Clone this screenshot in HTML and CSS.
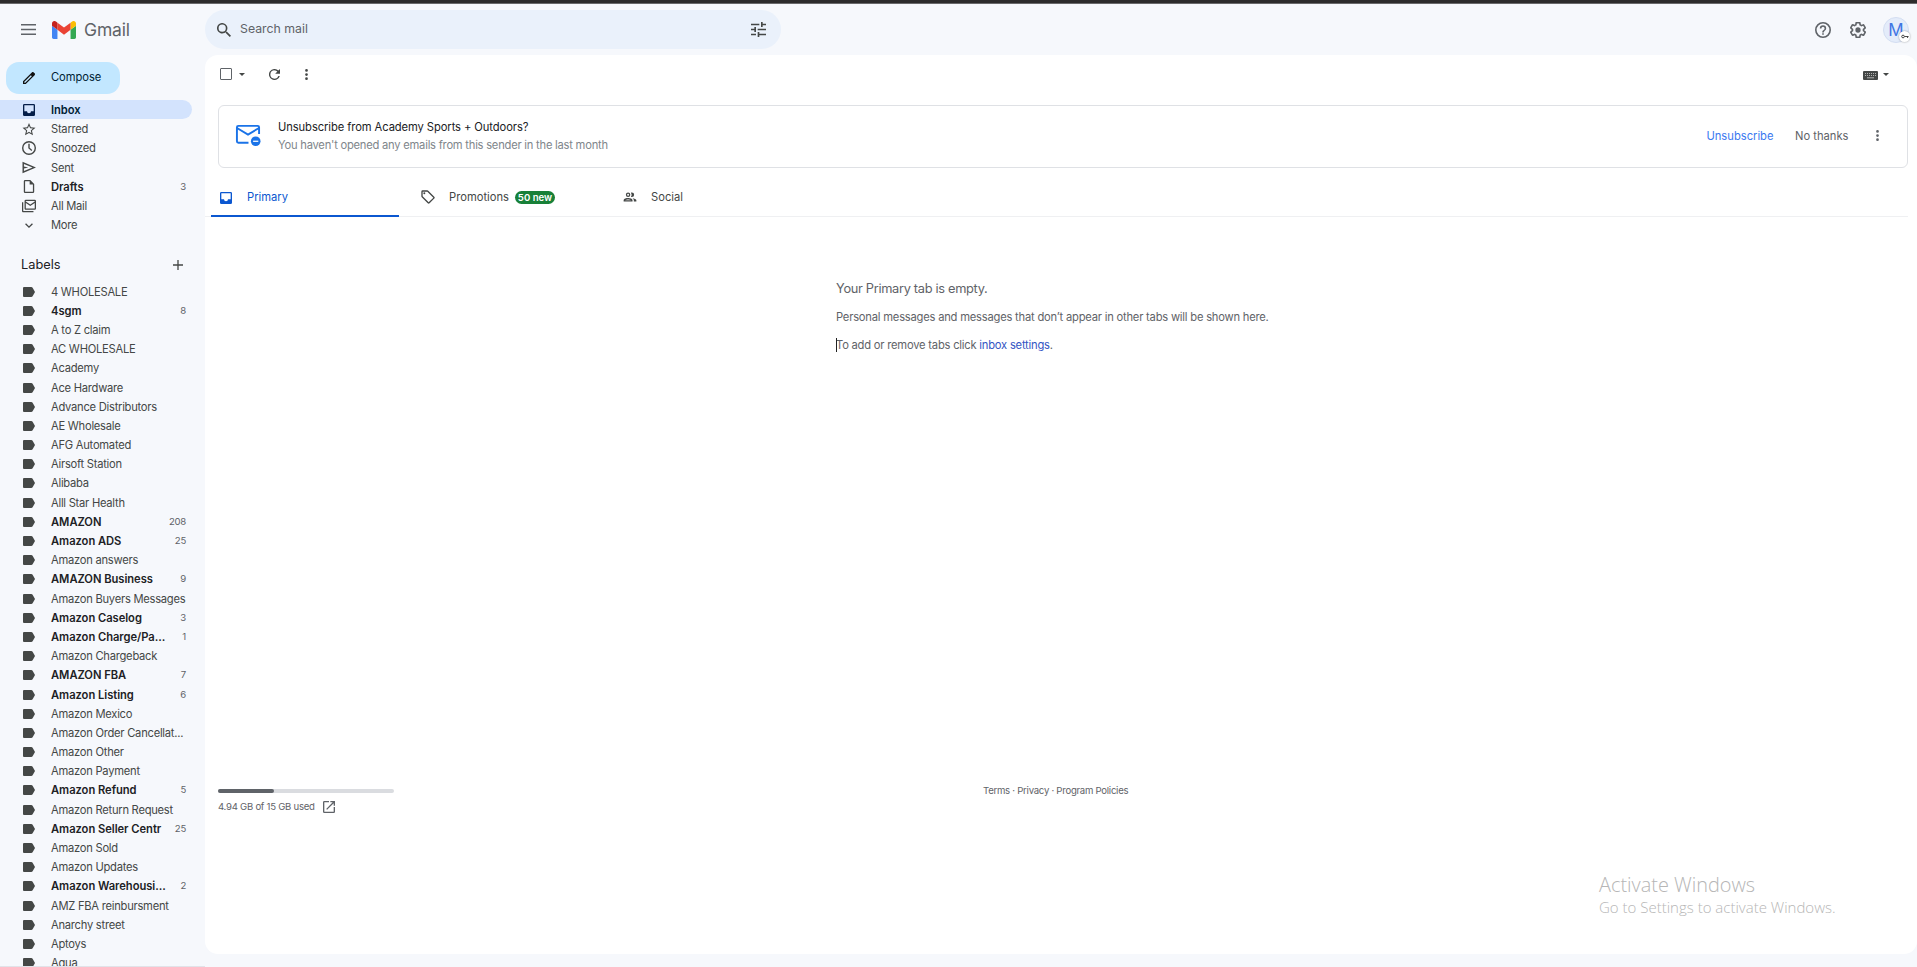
FILE: index.html
```
<!DOCTYPE html>
<html lang="en">
<head>
<meta charset="utf-8">
<title>Gmail</title>
<link rel="stylesheet" href="styles.css">
</head>
<body>
<svg class="sprite" aria-hidden="true">
  <symbol id="label" viewBox="0 0 12 10"><path d="M1 0h7.3q.8 0 1.3.7L12 5 9.600 9.300Q9.100 10 8.300 10H1Q0 10 0 9V1Q0 0 1 0z"/></symbol>
  <symbol id="inbox" viewBox="3 3 18 18"><path d="M19 3H5a2 2 0 0 0-2 2v14a2 2 0 0 0 2 2h14a2 2 0 0 0 2-2V5a2 2 0 0 0-2-2zm0 11h-4a3 3 0 0 1-6 0H5V5h14z"/></symbol>
  <symbol id="dots" viewBox="10 4 4 16"><path d="M12 8a2 2 0 1 0 0-4 2 2 0 0 0 0 4zm0 2a2 2 0 1 0 0 4 2 2 0 0 0 0-4zm0 6a2 2 0 1 0 0 4 2 2 0 0 0 0-4z"/></symbol>
  <symbol id="caret" viewBox="0 0 10 5"><path d="M0 0h10L5 5z"/></symbol>
</svg>
<div class="topline"></div>
<header class="header">
  <div class="brand">
    <svg class="menu" viewBox="0 0 15 11"><path d="M0 .8h15M0 5.500h15M0 10.200h15"/></svg>
    <svg class="logo" viewBox="52 42 88 66"><path fill="#4285f4" d="M58 108h14V74L52 59v43c0 3.320 2.690 6 6 6"/><path fill="#34a853" d="M120 108h14c3.320 0 6-2.690 6-6V59l-20 15"/><path fill="#fbbc04" d="M120 48v26l20-15v-8c0-7.420-8.470-11.650-14.400-7.200"/><path fill="#ea4335" d="M72 74V48l24 18 24-18v26L96 92"/><path fill="#c5221f" d="M52 51v8l20 15V48l-5.600-4.200c-5.940-4.450-14.400-.22-14.400 7.200"/></svg>
    <span class="wordmark">Gmail</span>
  </div>
  <div class="search">
    <svg class="i-search" viewBox="3 3 17.500 17.500"><path d="M15.500 14h-.79l-.28-.27A6.500 6.500 0 1 0 13.730 14.430l.27.28v.79l5 4.990L20.490 19zM9.500 14a4.500 4.500 0 1 1 0-9 4.500 4.500 0 0 1 0 9z"/></svg>
    <span>Search mail</span>
    <svg class="i-tune" viewBox="3 3 18 18"><path d="M3 17v2h6v-2zM3 5v2h10V5zm10 16v-2h8v-2h-8v-2h-2v6zM7 9v2H3v2h4v2h2V9zm14 4v-2H11v2zm-6-4h2V7h4V5h-4V3h-2z"/></svg>
  </div>
  <div class="account">
    <svg class="i-round" viewBox="2 2 20 20"><path d="M11 18h2v-2h-2zm1-16a10 10 0 1 0 0 20 10 10 0 0 0 0-20zm0 18a8 8 0 1 1 0-16 8 8 0 0 1 0 16zm0-14a4 4 0 0 0-4 4h2a2 2 0 1 1 4 0c0 2-3 1.750-3 5h2c0-2.250 3-2.500 3-5a4 4 0 0 0-4-4z"/></svg>
    <svg class="i-round" viewBox="2 2 20 20"><path d="M13.850 22.250h-3.700c-.74 0-1.360-.54-1.450-1.270l-.27-1.890c-.27-.14-.53-.29-.79-.46l-1.800.72c-.7.26-1.470-.03-1.810-.65L2.200 15.530c-.35-.66-.2-1.440.36-1.880l1.530-1.190c-.01-.15-.02-.3-.02-.46 0-.15.010-.31.020-.46l-1.520-1.190c-.59-.45-.74-1.260-.37-1.880l1.850-3.190c.34-.62 1.110-.9 1.790-.63l1.810.73c.26-.17.52-.32.780-.46l.27-1.910c.09-.7.710-1.250 1.440-1.250h3.700c.74 0 1.360.54 1.450 1.270l.27 1.890c.27.14.53.29.790.46l1.800-.72c.71-.26 1.480.03 1.820.65l1.840 3.180c.36.66.2 1.440-.36 1.880l-1.520 1.190c.01.15.02.3.020.46s-.01.310-.02.460l1.520 1.190c.56.450.72 1.230.37 1.860l-1.860 3.220c-.34.620-1.110.9-1.800.63l-1.800-.72c-.26.17-.52.320-.78.460l-.27 1.910c-.1.680-.72 1.220-1.460 1.220zm-3.230-2h2.760l.37-2.550.53-.22c.44-.18.880-.44 1.340-.78l.45-.34 2.380.96 1.380-2.400-2.030-1.580.07-.56c.03-.26.060-.51.060-.78s-.03-.53-.06-.78l-.07-.56 2.030-1.580-1.390-2.400-2.390.96-.45-.35c-.42-.32-.87-.58-1.330-.77l-.52-.22-.37-2.550h-2.760l-.37 2.550-.53.210c-.44.190-.88.440-1.340.79l-.45.330-2.380-.95-1.390 2.390 2.030 1.580-.07.560a7 7 0 0 0-.06.790c0 .26.020.530.060.780l.07.560-2.030 1.580 1.380 2.400 2.390-.96.450.35c.43.330.86.580 1.330.77l.53.220z"/><circle cx="12" cy="12" r="3.300"/></svg>
    <div class="avatar">M<span class="key"><svg viewBox="0 0 9 5"><circle cx="2.300" cy="2.500" r="1.500"/><path d="M4 2.500h4.500M7.400 2.500v1.700"/></svg></span></div>
  </div>
</header>
<div class="body">
  <nav class="side">
    <div class="compose"><svg viewBox="3 3 18 18"><path d="M20.410 4.940l-1.350-1.350a2 2 0 0 0-2.830 0L3 16.820V21h4.180L20.410 7.770a2 2 0 0 0 0-2.830zM6.410 19.060 5 19v-1.360l9.820-9.820 1.410 1.410z"/></svg><span>Compose</span></div>
    <div class="rows">
      <div class="row on"><svg class="ic" viewBox="0 0 12 12"><use href="#inbox"/></svg><span class="b">Inbox</span></div>
      <div class="row"><svg class="ic" viewBox="2 2 20 20"><path d="M22 9.240l-7.190-.62L12 2 9.190 8.630 2 9.240l5.460 4.730L5.820 21 12 17.270 18.180 21l-1.630-7.030zM12 15.400l-3.760 2.270 1-4.280-3.320-2.880 4.380-.38L12 6.100l1.710 4.040 4.380.38-3.320 2.880 1 4.280z"/></svg><span>Starred</span></div>
      <div class="row"><svg class="ic wide" viewBox="2 2 20 20"><path d="M12 2a10 10 0 1 0 0 20 10 10 0 0 0 0-20zm0 18a8 8 0 1 1 0-16 8 8 0 0 1 0 16zm1-14h-2v6.400l4.400 3.800 1.200-1.400-3.600-3.100z"/></svg><span>Snoozed</span></div>
      <div class="row"><svg class="ic" viewBox="2.500 3 19 18"><path d="M3 4v16l19-8zm2 3l11.900 5L5 17v-3.700l6-1.300-6-1.300z"/></svg><span>Sent</span></div>
      <div class="row"><svg class="ic" viewBox="2 2 20 20"><path d="M14 2H6a2 2 0 0 0-2 2v16a2 2 0 0 0 2 2h12a2 2 0 0 0 2-2V8zM6 20V4h7v5h5v11z"/></svg><span class="b">Drafts</span><i>3</i></div>
      <div class="row"><svg class="ic wide" viewBox="1 2 22 20"><path d="M21 2H7a2 2 0 0 0-2 2v12c0 1.100.9 2 2 2h14a2 2 0 0 0 2-2V4a2 2 0 0 0-2-2zm0 14H7V7.400l7 4.600 7-4.600zm-7-6.300L7 5V4h14v1zM3 6H1v14c0 1.100.9 2 2 2h16v-2H3z"/></svg><span>All Mail</span></div>
      <div class="row"><svg class="ic" viewBox="2 2 20 20"><path d="M7.400 8.600 12 13.200l4.600-4.600L18 10l-6 6-6-6z"/></svg><span>More</span></div>
    </div>
    <div class="labels-head"><span>Labels</span><svg viewBox="0 0 10 10"><path d="M5 0v10M0 5h10"/></svg></div>
    <div class="rows labels">
      <div class="row"><svg class="tag"><use href="#label"/></svg><span>4 WHOLESALE</span></div>
      <div class="row"><svg class="tag"><use href="#label"/></svg><span class="b">4sgm</span><i>8</i></div>
      <div class="row"><svg class="tag"><use href="#label"/></svg><span>A to Z claim</span></div>
      <div class="row"><svg class="tag"><use href="#label"/></svg><span>AC WHOLESALE</span></div>
      <div class="row"><svg class="tag"><use href="#label"/></svg><span>Academy</span></div>
      <div class="row"><svg class="tag"><use href="#label"/></svg><span>Ace Hardware</span></div>
      <div class="row"><svg class="tag"><use href="#label"/></svg><span>Advance Distributors</span></div>
      <div class="row"><svg class="tag"><use href="#label"/></svg><span>AE Wholesale</span></div>
      <div class="row"><svg class="tag"><use href="#label"/></svg><span>AFG Automated</span></div>
      <div class="row"><svg class="tag"><use href="#label"/></svg><span>Airsoft Station</span></div>
      <div class="row"><svg class="tag"><use href="#label"/></svg><span>Alibaba</span></div>
      <div class="row"><svg class="tag"><use href="#label"/></svg><span>Alll Star Health</span></div>
      <div class="row"><svg class="tag"><use href="#label"/></svg><span class="b">AMAZON</span><i>208</i></div>
      <div class="row"><svg class="tag"><use href="#label"/></svg><span class="b">Amazon ADS</span><i>25</i></div>
      <div class="row"><svg class="tag"><use href="#label"/></svg><span>Amazon answers</span></div>
      <div class="row"><svg class="tag"><use href="#label"/></svg><span class="b">AMAZON Business</span><i>9</i></div>
      <div class="row"><svg class="tag"><use href="#label"/></svg><span>Amazon Buyers Messages</span></div>
      <div class="row"><svg class="tag"><use href="#label"/></svg><span class="b">Amazon Caselog</span><i>3</i></div>
      <div class="row"><svg class="tag"><use href="#label"/></svg><span class="b">Amazon Charge/Pa...</span><i>1</i></div>
      <div class="row"><svg class="tag"><use href="#label"/></svg><span>Amazon Chargeback</span></div>
      <div class="row"><svg class="tag"><use href="#label"/></svg><span class="b">AMAZON FBA</span><i>7</i></div>
      <div class="row"><svg class="tag"><use href="#label"/></svg><span class="b">Amazon Listing</span><i>6</i></div>
      <div class="row"><svg class="tag"><use href="#label"/></svg><span>Amazon Mexico</span></div>
      <div class="row"><svg class="tag"><use href="#label"/></svg><span>Amazon Order Cancellat...</span></div>
      <div class="row"><svg class="tag"><use href="#label"/></svg><span>Amazon Other</span></div>
      <div class="row"><svg class="tag"><use href="#label"/></svg><span>Amazon Payment</span></div>
      <div class="row"><svg class="tag"><use href="#label"/></svg><span class="b">Amazon Refund</span><i>5</i></div>
      <div class="row"><svg class="tag"><use href="#label"/></svg><span>Amazon Return Request</span></div>
      <div class="row"><svg class="tag"><use href="#label"/></svg><span class="b">Amazon Seller Centr</span><i>25</i></div>
      <div class="row"><svg class="tag"><use href="#label"/></svg><span>Amazon Sold</span></div>
      <div class="row"><svg class="tag"><use href="#label"/></svg><span>Amazon Updates</span></div>
      <div class="row"><svg class="tag"><use href="#label"/></svg><span class="b">Amazon Warehousi...</span><i>2</i></div>
      <div class="row"><svg class="tag"><use href="#label"/></svg><span>AMZ FBA reinbursment</span></div>
      <div class="row"><svg class="tag"><use href="#label"/></svg><span>Anarchy street</span></div>
      <div class="row"><svg class="tag"><use href="#label"/></svg><span>Aptoys</span></div>
      <div class="row"><svg class="tag"><use href="#label"/></svg><span>Aqua</span></div>
    </div>
  </nav>
  <main class="panel">
    <div class="toolbar">
      <span class="box"></span>
      <svg class="caret"><use href="#caret"/></svg>
      <svg class="refresh" viewBox="4 4 16 16"><path d="M17.650 6.350A8 8 0 1 0 19.730 14h-2.080A6 6 0 1 1 12 6c1.660 0 3.140.69 4.220 1.780L13 11h7V4z"/></svg>
      <svg class="dots"><use href="#dots"/></svg>
      <svg class="keyboard" viewBox="0 0 15 9"><rect width="15" height="9" rx="1"/><path d="M2 2.500h11M2 4.500h11" stroke-dasharray="1 1"/><path d="M4 6.800h7"/></svg>
      <svg class="caret"><use href="#caret"/></svg>
    </div>
    <section class="banner">
      <svg class="unsub" viewBox="0 0 27 23"><path d="M25 10V3q0-1.500-1.500-1.500h-20Q2 1.500 2 3v14.500Q2 19 3.500 19H14M2.500 4l11 6.500L24.500 4" fill="none" stroke="#1a73e8" stroke-width="2"/><circle cx="21.500" cy="17.500" r="5" fill="#1a73e8"/><path d="M18.800 17.500h5.400" stroke="#fff" stroke-width="1.300"/></svg>
      <div class="copy"><div class="title">Unsubscribe from Academy Sports + Outdoors?</div><div class="sub">You haven't opened any emails from this sender in the last month</div></div>
      <span class="act blue">Unsubscribe</span>
      <span class="act">No thanks</span>
      <svg class="dots"><use href="#dots"/></svg>
    </section>
    <div class="tabs">
      <div class="tab sel"><svg viewBox="0 0 12 12"><use href="#inbox"/></svg><span>Primary</span></div>
      <div class="tab promo"><svg viewBox="1.500 1.500 21 21"><path d="M21.400 11.600l-9-9A2 2 0 0 0 11 2H4a2 2 0 0 0-2 2v7c0 .55.220 1.050.590 1.420l9 9a2 2 0 0 0 2.820 0l7-7a2 2 0 0 0 0-2.820zM13 20l-9-9V4h7l9 9z"/><circle cx="6.500" cy="6.500" r="1.500"/></svg><span>Promotions</span><b>50 new</b></div>
      <div class="tab social"><svg viewBox="1 2 22 20"><path d="M9 13.750c-2.340 0-7 1.170-7 3.500V19h14v-1.750c0-2.330-4.660-3.500-7-3.500zM4.340 17c.84-.58 2.870-1.250 4.660-1.250s3.820.670 4.660 1.250zM9 12a3.500 3.500 0 1 0 0-7 3.500 3.500 0 0 0 0 7zm0-5a1.500 1.500 0 1 1 0 3 1.500 1.500 0 0 1 0-3zm7.040 6.810c1.160.840 1.960 1.960 1.960 3.440V19h4v-1.750c0-2.020-3.500-3.170-5.960-3.440zM15 12a3.500 3.500 0 1 0 0-7c-.54 0-1.040.130-1.500.350a5.500 5.500 0 0 1 0 6.300c.46.220.96.350 1.500.350z"/></svg><span>Social</span></div>
    </div>
    <div class="empty">
      <p class="lead">Your Primary tab is empty.</p>
      <p>Personal messages and messages that don’t appear in other tabs will be shown here.</p>
      <p class="cursor">To add or remove tabs click <a>inbox settings</a>.</p>
    </div>
    <footer class="foot">
      <div class="storage"><div class="bar"><div class="fill"></div></div><div class="used"><span>4.94 GB of 15 GB used</span><svg viewBox="3 3 18 18"><path d="M19 19H5V5h7V3H5a2 2 0 0 0-2 2v14a2 2 0 0 0 2 2h14a2 2 0 0 0 2-2v-7h-2zM14 3v2h3.590l-9.830 9.830 1.410 1.410L19 6.410V10h2V3z"/></svg></div></div>
      <div class="links">Terms · Privacy · Program Policies</div>
    </footer>
  </main>
</div>
<div class="watermark"><div>Activate Windows</div><p>Go to Settings to activate Windows.</p></div>
</body>
</html>
```
FILE: styles.css
```
* { box-sizing: border-box; }
body {
  margin: 0;
  width: 1917px;
  height: 967px;
  overflow: hidden;
  display: flex;
  flex-direction: column;
  background: #f6f8fc;
  color: #444746;
  font: 11.2px/18px Inter, "Open Sans", sans-serif;
  white-space: nowrap;
}
svg { display: block; flex: none; fill: #444746; }
.sprite { position: absolute; width: 0; height: 0; }
.topline { height: 4px; background: #2d2c2c; border-bottom: 1px solid #69696b; flex: none; }

.header { height: 51px; display: flex; flex: none; }
.brand { width: 205px; display: flex; align-items: center; padding: 1px 0 0 21px; }
.menu { width: 15px; height: 11px; stroke: #5f6368; stroke-width: 1.5; margin-top: -1px; }
.logo { width: 24px; height: 18px; margin-left: 16px; }
.wordmark { margin: 0 0 0 8px; font-size: 17.5px; color: #5f6368; letter-spacing: -.15px; line-height: 22px; }
.search { width: 576px; height: 39px; margin-top: 6px; border-radius: 20px; background: #eaf1fb; display: flex; align-items: center; padding: 0 15.500px 0 12px; font-size: 12.3px; color: #5f6368; }
.search span { margin: -2px 0 0 9px; flex: 1; }
.i-search { width: 14px; height: 14px; }
.i-tune { width: 15px; height: 15px; }
.account { margin-left: auto; display: flex; align-items: center; padding: 0 8px 0 0; }
.i-round { width: 16px; height: 16px; fill: #5f6368; margin-right: 19px; }
.i-round + .i-round { margin-right: 17.500px; }
.avatar { position: relative; width: 26px; height: 26px; border-radius: 50%; background: #e4ecfa; border: 1px solid #d3def2; color: #3f76e4; font-size: 17px; line-height: 24px; text-align: center; }
.key { position: absolute; left: 15px; top: 13px; width: 11px; height: 11px; border-radius: 50%; background: #fff; box-shadow: 0 0 2px #0006; display: flex; align-items: center; justify-content: center; }
.key svg { width: 8px; height: 5px; fill: none; stroke: #333; stroke-width: 1; }

.body { flex: 1; min-height: 0; display: flex; }
.side { width: 205px; flex: none; overflow: hidden; border-bottom: 1px solid #e1e3e9; }
.compose { width: 114px; height: 32px; margin: 7px 0 0 6px; border-radius: 13px; background: #c2e7ff; color: #001d35; display: flex; align-items: center; padding: 0 0 2px 17px; letter-spacing: -.05px; }
.compose svg { width: 12px; height: 12px; fill: #111; margin: 2px 16px 0 0; }
.rows { margin-top: 6px; }
.row { height: 19.2px; width: 192px; display: flex; align-items: center; padding: 1px 6px 0 22px; letter-spacing: -.26px; }
.row.on { background: #d3e3fd; border-radius: 0 10px 10px 0; color: #001d35; }
.row.on svg { fill: #041e49; }
.row span { margin-left: 15px; flex: 1; width: 0; }
.row .b { font-weight: 600; color: #202124; letter-spacing: -.04px; }
.row.on .b { color: #001d35; }
.row i { font-style: normal; font-size: 9.6px; color: #5f6368; }
.ic { width: 14px; height: 13px; }
.row.on .ic { height: 12px; }
.tag { height: 10px; width: 12px; margin: 0 1px; fill: #444746; }
.row .ic.wide { height: 14px; }
.labels-head { display: flex; align-items: center; justify-content: space-between; height: 22px; margin: 19.600px 22px 0 21px; font-size: 12.8px; color: #202124; }
.labels-head svg { width: 10px; height: 10px; stroke: #444746; stroke-width: 1.3; }
.rows.labels { margin-top: 5.600px; }

.panel { flex: 1; height: 899px; border-radius: 13px; background: #fff; display: flex; flex-direction: column; }
.toolbar { height: 38px; display: flex; align-items: center; padding: 0 28px 0 15px; }
.box { width: 12px; height: 12px; border: 1.5px solid #5f6368; border-radius: 1px; }
.caret { width: 6px; height: 3px; margin-left: 7px; }
.refresh { width: 11px; height: 11px; margin-left: 24px; }
.dots { width: 3px; height: 11px; }
.refresh + .dots { margin-left: 25px; }
.keyboard { width: 15px; height: 9px; margin: 3px 0 0 auto; stroke: #ccc; stroke-width: .8; }
.keyboard rect { stroke: none; }
.keyboard + .caret { margin-left: 5px; }
.banner { height: 63px; margin: 12px 9px 0 13px; border: 1px solid #dfe1e5; border-radius: 6px; display: flex; align-items: center; padding: 0 28px 2px 16px; }
.unsub { width: 26px; height: 23px; }
.copy { margin-left: 17px; flex: 1; }
.title { color: #202124; letter-spacing: -.085px; }
.sub { color: #80868b; letter-spacing: -.235px; }
.act { color: #5f6368; margin-right: 21.500px; }
.act.blue { color: #3b78f0; }
.banner .dots { margin-left: 6px; fill: #5f6368; }
.tabs { height: 41px; margin: 8px 9px 0 0; border-bottom: 1px solid #eff0f2; display: flex; padding-left: 6px; }
.tab { width: 202px; height: 41px; display: flex; align-items: center; padding-top: 1px; }
.tab svg { width: 14px; height: 14px; }
.tab span { margin-left: 14px; }
.tab.sel { width: 188px; padding: 2px 0 0 9px; color: #0b57d0; border-bottom: 2px solid #0b57d0; }
.tab.sel svg { width: 12px; height: 12px; fill: #0b57d0; margin-top: 2px; }
.tab.sel span { margin-left: 15px; }
.tab.promo { margin-left: 22px; }
.tab b { margin-left: 6px; width: 40px; height: 13px; border-radius: 7px; background: #188038; color: #fff; font-size: 9.600px; line-height: 13px; font-weight: 600; text-align: center; }
.empty { margin: 63px 0 0 631px; color: #5f6368; letter-spacing: -.215px; }
.empty p { margin: 0 0 10px; width: max-content; }
.empty .lead { font-size: 12.8px; letter-spacing: -.31px; }
.empty a { color: #3355c4; }
.cursor { position: relative; }
.cursor::before { content: ""; position: absolute; left: 0; top: 2px; width: 1px; height: 14px; background: #222; }
.foot { display: flex; margin: auto 0 0; height: 165px; padding-left: 13px; font-size: 9.6px; color: #5f6368; letter-spacing: -.27px; }
.storage { width: 176px; }
.bar { height: 4px; background: #dadce0; border-radius: 2px; }
.fill { width: 56px; height: 4px; background: #5f6368; border-radius: 2px; }
.used { display: flex; align-items: center; margin-top: 5px; }
.used svg { width: 12px; height: 12px; margin: -1px 0 0 8px; fill: #5f6368; }
.links { margin: -7px 0 0 589px; }
.watermark { position: absolute; left: 1599px; top: 871px; color: #b6b6b6; font-family: "Open Sans", sans-serif; font-weight: 300; font-size: 19.9px; line-height: 27px; }
.watermark p { margin: -1px 0 0; font-size: 15px; line-height: 20px; }
```
